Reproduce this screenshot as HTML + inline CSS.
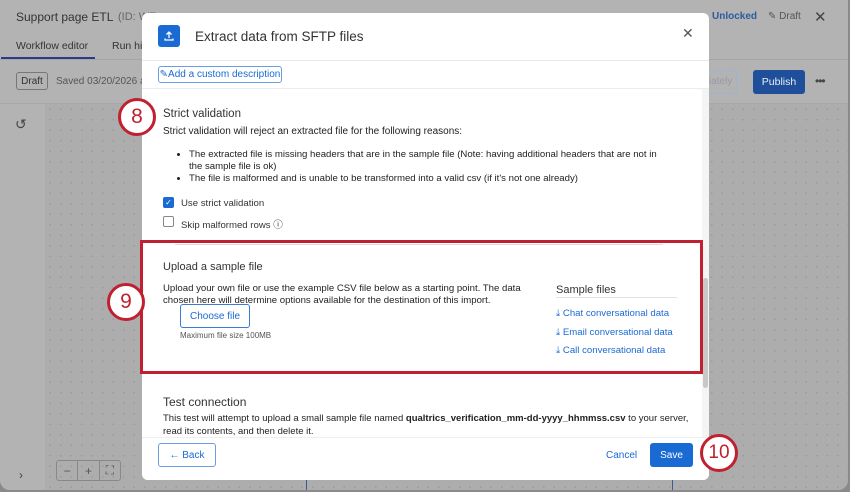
<!DOCTYPE html>
<html><head><style>
*{box-sizing:border-box;margin:0;padding:0}
body{width:850px;height:492px;overflow:hidden;font-family:"Liberation Sans",sans-serif;background:#8a8a8a;position:relative}
.win{position:absolute;left:0;top:0;width:848px;height:490px;background:#b3b3b3;border-radius:0 0 10px 10px;overflow:hidden}
.abs{position:absolute;white-space:nowrap}
.canvas{position:absolute;left:45px;top:104px;right:0;bottom:0;background-color:#adadad;background-image:radial-gradient(#9a9a9a 0.8px,transparent 1px);background-size:10.5px 10.5px}
.modal{position:absolute;left:142px;top:13px;width:567px;height:467px;background:#fff;border-radius:6px;overflow:hidden}
.blue{color:#1a6ad4}
.btn{display:flex;align-items:center;justify-content:center}
.circ{position:absolute;width:38px;height:38px;border-radius:50%;border:3px solid #c0202f;background:#fff;color:#c0202f;font-size:21px;display:flex;align-items:center;justify-content:center}
</style></head><body>
<div class="win">
<div class="abs" style="left:16px;top:10px;font-size:12px;color:#333">Support page ETL</div>
<div class="abs" style="left:118px;top:11px;font-size:11px;color:#666">(ID: WF</div>
<div class="abs" style="left:16px;top:40px;font-size:10.5px;color:#333">Workflow editor</div>
<div class="abs" style="left:112px;top:40px;font-size:10.5px;color:#333">Run his</div>
<div class="abs" style="left:1px;top:57px;width:94px;height:2px;background:#2a3a8a"></div>
<div class="abs" style="left:0;top:59px;right:0;height:1px;background:#a5a5a5"></div>
<div class="abs btn" style="left:16px;top:72px;width:32px;height:18px;border:1px solid #777;border-radius:3px;font-size:10px;color:#333">Draft</div>
<div class="abs" style="left:56px;top:76px;font-size:10px;color:#555">Saved 03/20/2026 at</div>
<div class="abs" style="left:712px;top:11px;font-size:10px;color:#2d5aa0;font-weight:bold">Unlocked</div>
<div class="abs" style="left:768px;top:11px;font-size:10px;color:#555">✎ Draft</div>
<div class="abs" style="left:814px;top:8px;font-size:15px;color:#444">✕</div>
<div class="abs" style="left:709px;top:70px;width:28px;height:24px;border:1px solid #9bb4d4;border-left:none;border-radius:0 4px 4px 0;font-size:10px;color:#99a;line-height:22px">iately</div>
<div class="abs btn" style="left:753px;top:70px;width:52px;height:24px;background:#1f4f9a;border-radius:3px;color:#e8eef8;font-size:10.5px">Publish</div>
<div class="abs" style="left:815px;top:74px;font-size:12px;color:#444;letter-spacing:-1px">•••</div>
<div class="canvas"></div>
<div class="abs" style="left:0;top:104px;width:45px;bottom:0;background:#b3b3b3"></div>
<div class="abs" style="left:0;top:103px;right:0;height:1px;background:#a8a8a8"></div>
<div class="abs" style="left:15px;top:116px;font-size:14px;color:#444">↺</div>
<div class="abs" style="left:19px;top:468px;font-size:12px;color:#444">›</div>
<div class="abs" style="left:56px;top:460px;width:65px;height:21px;border:1px solid #888;border-radius:3px;display:flex;font-size:12px;color:#555">
<div class="btn" style="flex:1;border-right:1px solid #888">−</div><div class="btn" style="flex:1;border-right:1px solid #888">+</div><div class="btn" style="flex:1">⛶</div></div>
<div class="abs" style="left:306px;top:478px;width:367px;height:20px;border:1px solid #3a5a9a;border-bottom:none"></div>
</div>

<div class="modal">
<div class="abs" style="left:16px;top:12px;width:22px;height:22px;background:#1a6ad4;border-radius:3px">
<svg width="22" height="22" viewBox="0 0 22 22"><path d="M11 13V7M8.5 9.5L11 7l2.5 2.5M7 13.5v1.5h8v-1.5" stroke="#fff" stroke-width="1.3" fill="none"/></svg></div>
<div class="abs" style="left:53px;top:16px;font-size:13.5px;color:#333">Extract data from SFTP files</div>
<div class="abs" style="left:540px;top:12px;font-size:14px;color:#555">✕</div>
<div class="abs" style="left:0;top:47px;width:567px;height:1px;background:#e8e8e8"></div>
<div class="abs blue btn" style="left:16px;top:53px;width:124px;height:17px;border:1px solid #6a9ee0;border-radius:3px;font-size:10px">✎Add a custom description</div>
<div class="abs" style="left:0;top:75px;width:567px;height:1px;background:#ececec"></div>
<div class="abs" style="left:560px;top:76px;width:7px;height:349px;background:#f4f4f4"></div>
<div class="abs" style="left:561px;top:265px;width:5px;height:110px;background:#c8c8c8;border-radius:3px"></div>

<div class="abs" style="left:21px;top:95px;font-size:11.5px;color:#333">Strict validation</div>
<div class="abs" style="left:21px;top:113px;font-size:10px;color:#222">Strict validation will reject an extracted file for the following reasons:</div>
<ul style="position:absolute;left:47px;top:136px;width:475px;font-size:9.6px;color:#222;line-height:12px">
<li>The extracted file is missing headers that are in the sample file (Note: having additional headers that are not in the sample file is ok)</li>
<li>The file is malformed and is unable to be transformed into a valid csv (if it's not one already)</li></ul>
<div class="abs btn" style="left:21px;top:184px;width:11px;height:11px;background:#1a6ad4;border-radius:2px;color:#fff;font-size:8px">✓</div>
<div class="abs" style="left:39px;top:185px;font-size:9.6px;color:#333">Use strict validation</div>
<div class="abs" style="left:21px;top:203px;width:11px;height:11px;border:1px solid #888;border-radius:2px"></div>
<div class="abs" style="left:39px;top:204px;font-size:9.6px;color:#333">Skip malformed rows ⓘ</div>
<div class="abs" style="left:33px;top:231px;width:488px;height:1px;background:#ddd"></div>
<div class="abs" style="left:21px;top:248px;font-size:11px;color:#333">Upload a sample file</div>
<div style="position:absolute;left:21px;top:270px;width:365px;font-size:9.6px;color:#222;line-height:11.5px">Upload your own file or use the example CSV file below as a starting point. The data chosen here will determine options available for the destination of this import.</div>
<div class="abs blue btn" style="left:38px;top:291px;width:70px;height:24px;border:1px solid #3a7ad8;border-radius:3px;font-size:10px">Choose file</div>
<div class="abs" style="left:38px;top:318px;font-size:8px;color:#555">Maximum file size 100MB</div>
<div class="abs" style="left:414px;top:271px;font-size:11px;color:#333">Sample files</div>
<div class="abs" style="left:414px;top:284px;width:121px;height:1px;background:#e2e2e2"></div>
<div class="abs blue" style="left:414px;top:292px;font-size:9.6px;line-height:18.5px">⤓ Chat conversational data<br>⤓ Email conversational data<br>⤓ Call conversational data</div>
<div class="abs" style="left:21px;top:382px;font-size:12px;color:#333">Test connection</div>
<div class="abs" style="left:21px;top:400px;font-size:9.5px;color:#222">This test will attempt to upload a small sample file named <b>qualtrics_verification_mm-dd-yyyy_hhmmss.csv</b> to your server,</div>
<div class="abs" style="left:21px;top:413px;font-size:9.5px;color:#222">read its contents, and then delete it.</div>
<div class="abs" style="left:0;top:424px;width:567px;height:43px;background:#fff;border-top:1px solid #eee"></div>
<div class="abs blue btn" style="left:16px;top:430px;width:58px;height:24px;border:1px solid #6a9ee0;border-radius:3px;font-size:10px">← Back</div>
<div class="abs blue" style="left:464px;top:437px;font-size:10px">Cancel</div>
<div class="abs btn" style="left:508px;top:430px;width:43px;height:24px;background:#1a6ad4;border-radius:3px;color:#fff;font-size:10px">Save</div>
</div>

<div class="abs" style="left:140px;top:240px;width:563px;height:134px;border:3px solid #c0202f"></div>
<div class="circ" style="left:118px;top:98px">8</div>
<div class="circ" style="left:107px;top:283px">9</div>
<div class="circ" style="left:700px;top:434px;font-size:19px">10</div>
</body></html>
